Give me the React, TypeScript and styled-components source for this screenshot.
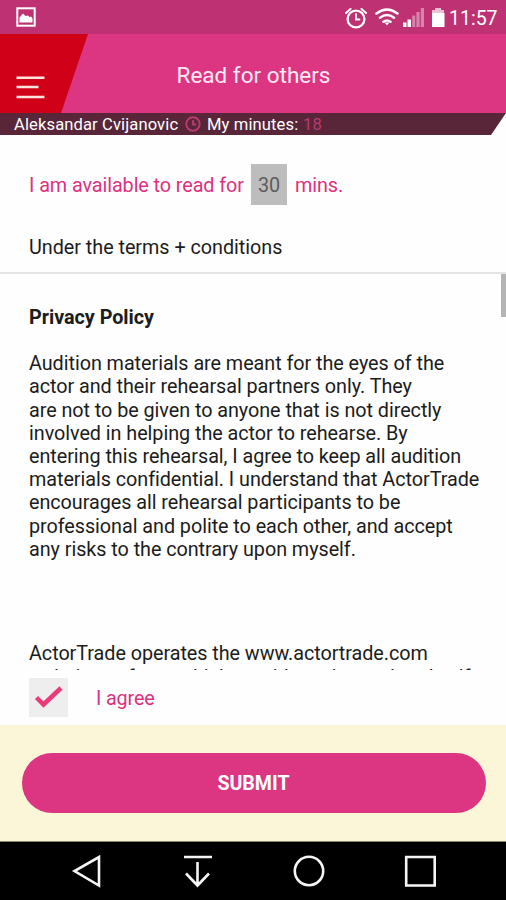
import React from "react";
import styled, { createGlobalStyle } from "styled-components";

const Global = createGlobalStyle`
  * { box-sizing: border-box; }
  body { margin: 0; background: #fff; font-family: Roboto, "Liberation Sans", sans-serif; }
`;

const Screen = styled.div`
  width: 506px;
  height: 900px;
  display: flex;
  flex-direction: column;
  overflow: hidden;
  background: #fefefe;
  color: #1c1c1c;
`;

const StatusBar = styled.div`
  height: 34px;
  flex: none;
  display: flex;
  align-items: center;
  background: #be3173;
  color: #fff;
  padding: 0 9px 0 16px;
`;

const StatusIcons = styled.svg`
  display: block;
  margin-left: auto;
`;

const Clock = styled.span`
  width: 48px;
  margin-left: 2px;
  font-size: 19.5px;
  line-height: 34px;
  padding-top: 3px;
  white-space: nowrap;
`;

const Header = styled.header`
  height: 79px;
  flex: none;
  display: grid;
  grid-template-columns: 88px 1fr 87px;
  background: #dc3682;
`;

const MenuButton = styled.button`
  border: 0;
  padding: 42px 0 0 16px;
  background: #d00018;
  clip-path: polygon(0 0, 100% 0, 60px 100%, 0 100%);
  display: flex;
  align-items: flex-start;
  justify-content: flex-start;
`;

const Title = styled.h1`
  margin: 0;
  text-align: center;
  font-size: 22.5px;
  font-weight: 400;
  line-height: 82px;
  color: #ffe9f4;
`;

const UserBar = styled.div`
  height: 22px;
  flex: none;
  display: flex;
  align-items: center;
  padding-left: 14px;
  background: #592639;
  clip-path: polygon(0 0, 100% 0, 491px 100%, 0 100%);
  font-size: 16.6px;
  color: #fff;
  white-space: pre;
`;

const UserText = styled.span<{ $w: number; $accent?: boolean; $gap?: number }>`
  width: ${(p) => p.$w}px;
  margin-left: ${(p) => p.$gap ?? 0}px;
  line-height: 22px;
  padding-top: 2px;
  letter-spacing: 0.1px;
  color: ${(p) => (p.$accent ? "#b93a70" : "#fff")};
`;

const Availability = styled.div`
  height: 41px;
  margin-top: 29px;
  padding-left: 29px;
  flex: none;
  display: flex;
  line-height: 43px;
  color: #db3280;
  font-size: 19.8px;
  letter-spacing: -0.08px;
  white-space: nowrap;
`;

const Lead = styled.span`
  width: 222px;
`;

const Minutes = styled.span`
  width: 36px;
  height: 41px;
  margin-right: 8px;
  background: #bdbdbd;
  color: #5c5c5c;
  text-align: center;
`;

const Terms = styled.div`
  height: 69px;
  flex: none;
  padding: 31px 0 0 29px;
  border-bottom: 2px solid #e4e4e4;
  font-size: 19.8px;
  line-height: 24px;
  letter-spacing: -0.03px;
`;

const Policy = styled.section`
  height: 396px;
  flex: none;
  display: flex;
  justify-content: space-between;
  overflow: hidden;
`;

const PolicyText = styled.div`
  padding: 32px 0 0 29px;
  font-size: 19.8px;
  line-height: 23.2px;
  white-space: nowrap;
`;

const PolicyTitle = styled.h2`
  margin: 0 0 23px;
  font-size: 19.8px;
  font-weight: 700;
  line-height: 23.2px;
  letter-spacing: -0.03px;
`;

const Line = styled.div<{ $drop?: number }>`
  letter-spacing: -0.05px;
  margin-top: ${(p) => p.$drop ?? 0}px;
`;

const Gap = styled.div`
  height: 81px;
`;

const ScrollThumb = styled.div`
  width: 5px;
  height: 43px;
  background: #b4b4b4;
`;

const Agree = styled.label`
  height: 55px;
  flex: none;
  display: flex;
  align-items: center;
  padding-left: 29px;
  gap: 28px;
  color: #db3280;
  font-size: 19.8px;
  line-height: 26px;
  letter-spacing: -0.15px;
`;

const AgreeText = styled.span`
  padding-top: 2px;
`;

const CheckBox = styled.span`
  width: 39px;
  height: 39px;
  background: #eee;
`;

const SubmitArea = styled.div`
  height: 117px;
  flex: none;
  padding: 28px 20px 0 22px;
  background: #fcf6d9;
  border-bottom: 1px solid #8b8974;
`;

const SubmitButton = styled.button`
  display: block;
  width: 464px;
  height: 60px;
  border: 0;
  border-radius: 30px;
  background: #dc3682;
  color: #fff;
  font: 700 19.6px/24px Roboto, sans-serif;
  padding: 2px 1px 0 0;
`;

const NavBar = styled.nav`
  height: 58px;
  background: #000;
`;

const Svg = styled.svg`
  display: block;
`;

const policyLines = [
  "Audition materials are meant for the eyes of the",
  "actor and their rehearsal partners only. They",
  "are not to be given to anyone that is not directly",
  "involved in helping the actor to rehearse. By",
  "entering this rehearsal, I agree to keep all audition",
  "materials confidential. I understand that ActorTrade",
  "encourages all rehearsal participants to be",
  "professional and polite to each other, and accept",
  "any risks to the contrary upon myself.",
];

export default function App() {
  return (
    <Screen>
      <Global />
      <StatusBar>
        <Svg width="20" height="20" viewBox="0 0 20 20">
          <rect x="1.3" y="1.3" width="17.4" height="17.4" fill="none" stroke="#fff" strokeWidth="2" />
          <path d="M3.5 15.5V10.5L7 6.500l2.500 2.500 2.500-.5 1.500 1.500 1.500-.5 1.500 2v4z" fill="#fff" />
        </Svg>
        <StatusIcons width="102" height="24" viewBox="0 0 102 24" fill="none" stroke="#fff" strokeLinecap="round">
          <circle cx="11" cy="14" r="8.4" strokeWidth="2.3" />
          <path d="M1 8 5.500 4M21 8 16.500 4" strokeWidth="2" />
          <path d="M11 9v5.500h3.500" strokeWidth="1.8" />
          <path d="M31.500 8.500q10.500-8 21 0M35 12.800q7-5.600 14 0M38.500 16.800q3.500-2.600 7 0" strokeWidth="2.5" />
          <path d="M39.500 17.500h5l-2.500 3z" fill="#fff" stroke="none" />
          <g fill="#fff" stroke="none">
            <path d="M58 17.500h3.500V22H58zM62.500 14.500H66V22h-3.500z" />
            <path d="M67.200 10.500h3V22h-3zM71.400 7h3.200v15h-3.200zM75.800 3h3.200v19h-3.200z" opacity=".4" />
            <path d="M87 5h3V3h6v2h3v3.500H87z" opacity=".7" />
            <path d="M87 8h12.500v14H87z" />
          </g>
        </StatusIcons>
        <Clock>11:57</Clock>
      </StatusBar>
      <Header>
        <MenuButton aria-label="Menu">
          <Svg width="30" height="24" viewBox="0 0 30 24">
            <path d="M.5 1.700h28M.5 11h22M.5 21h28" stroke="#ffe3dc" strokeWidth="2.600" />
          </Svg>
        </MenuButton>
        <Title>Read for others</Title>
      </Header>
      <UserBar>
        <UserText $w={171}>Aleksandar Cvijanovic</UserText>
        <Svg width="16" height="16" viewBox="0 0 16 16" fill="none" stroke="#b93a70" strokeWidth="1.900">
          <circle cx="8" cy="8" r="6.700" />
          <path d="M8 4v4.500h3.200" />
        </Svg>
        <UserText $w={96} $gap={6}>My minutes:</UserText>
        <UserText $w={30} $accent>18</UserText>
      </UserBar>
      <Availability>
        <Lead>I am available to read for</Lead>
        <Minutes>30</Minutes>
        <span>mins.</span>
      </Availability>
      <Terms>Under the terms + conditions</Terms>
      <Policy>
        <PolicyText>
          <PolicyTitle>Privacy Policy</PolicyTitle>
          {policyLines.map((text) => (
            <Line key={text}>{text}</Line>
          ))}
          <Gap />
          <Line>ActorTrade operates the www.actortrade.com</Line>
          <Line $drop={1}>website as from, which provides other as head self</Line>
        </PolicyText>
        <ScrollThumb />
      </Policy>
      <Agree>
        <CheckBox>
          <Svg width="39" height="39" viewBox="0 0 39 39">
            <path d="M7.500 19.500 14.500 26.500 32 10" fill="none" stroke="#ec3b7b" strokeWidth="4.500" />
          </Svg>
        </CheckBox>
        <AgreeText>I agree</AgreeText>
      </Agree>
      <SubmitArea>
        <SubmitButton>SUBMIT</SubmitButton>
      </SubmitArea>
      <NavBar>
        <Svg width="506" height="58" viewBox="0 0 506 58" fill="none" stroke="#f5f5f5" strokeWidth="2.600">
          <path d="M99 15v28.500L74.500 29z" />
          <path d="M184 15h28M197.500 20v23M186 31.500l11.500 12 11.500-12" />
          <circle cx="309" cy="29" r="14.200" />
          <path d="M406.200 15h28.500v28.500h-28.500z" />
        </Svg>
      </NavBar>
    </Screen>
  );
}
